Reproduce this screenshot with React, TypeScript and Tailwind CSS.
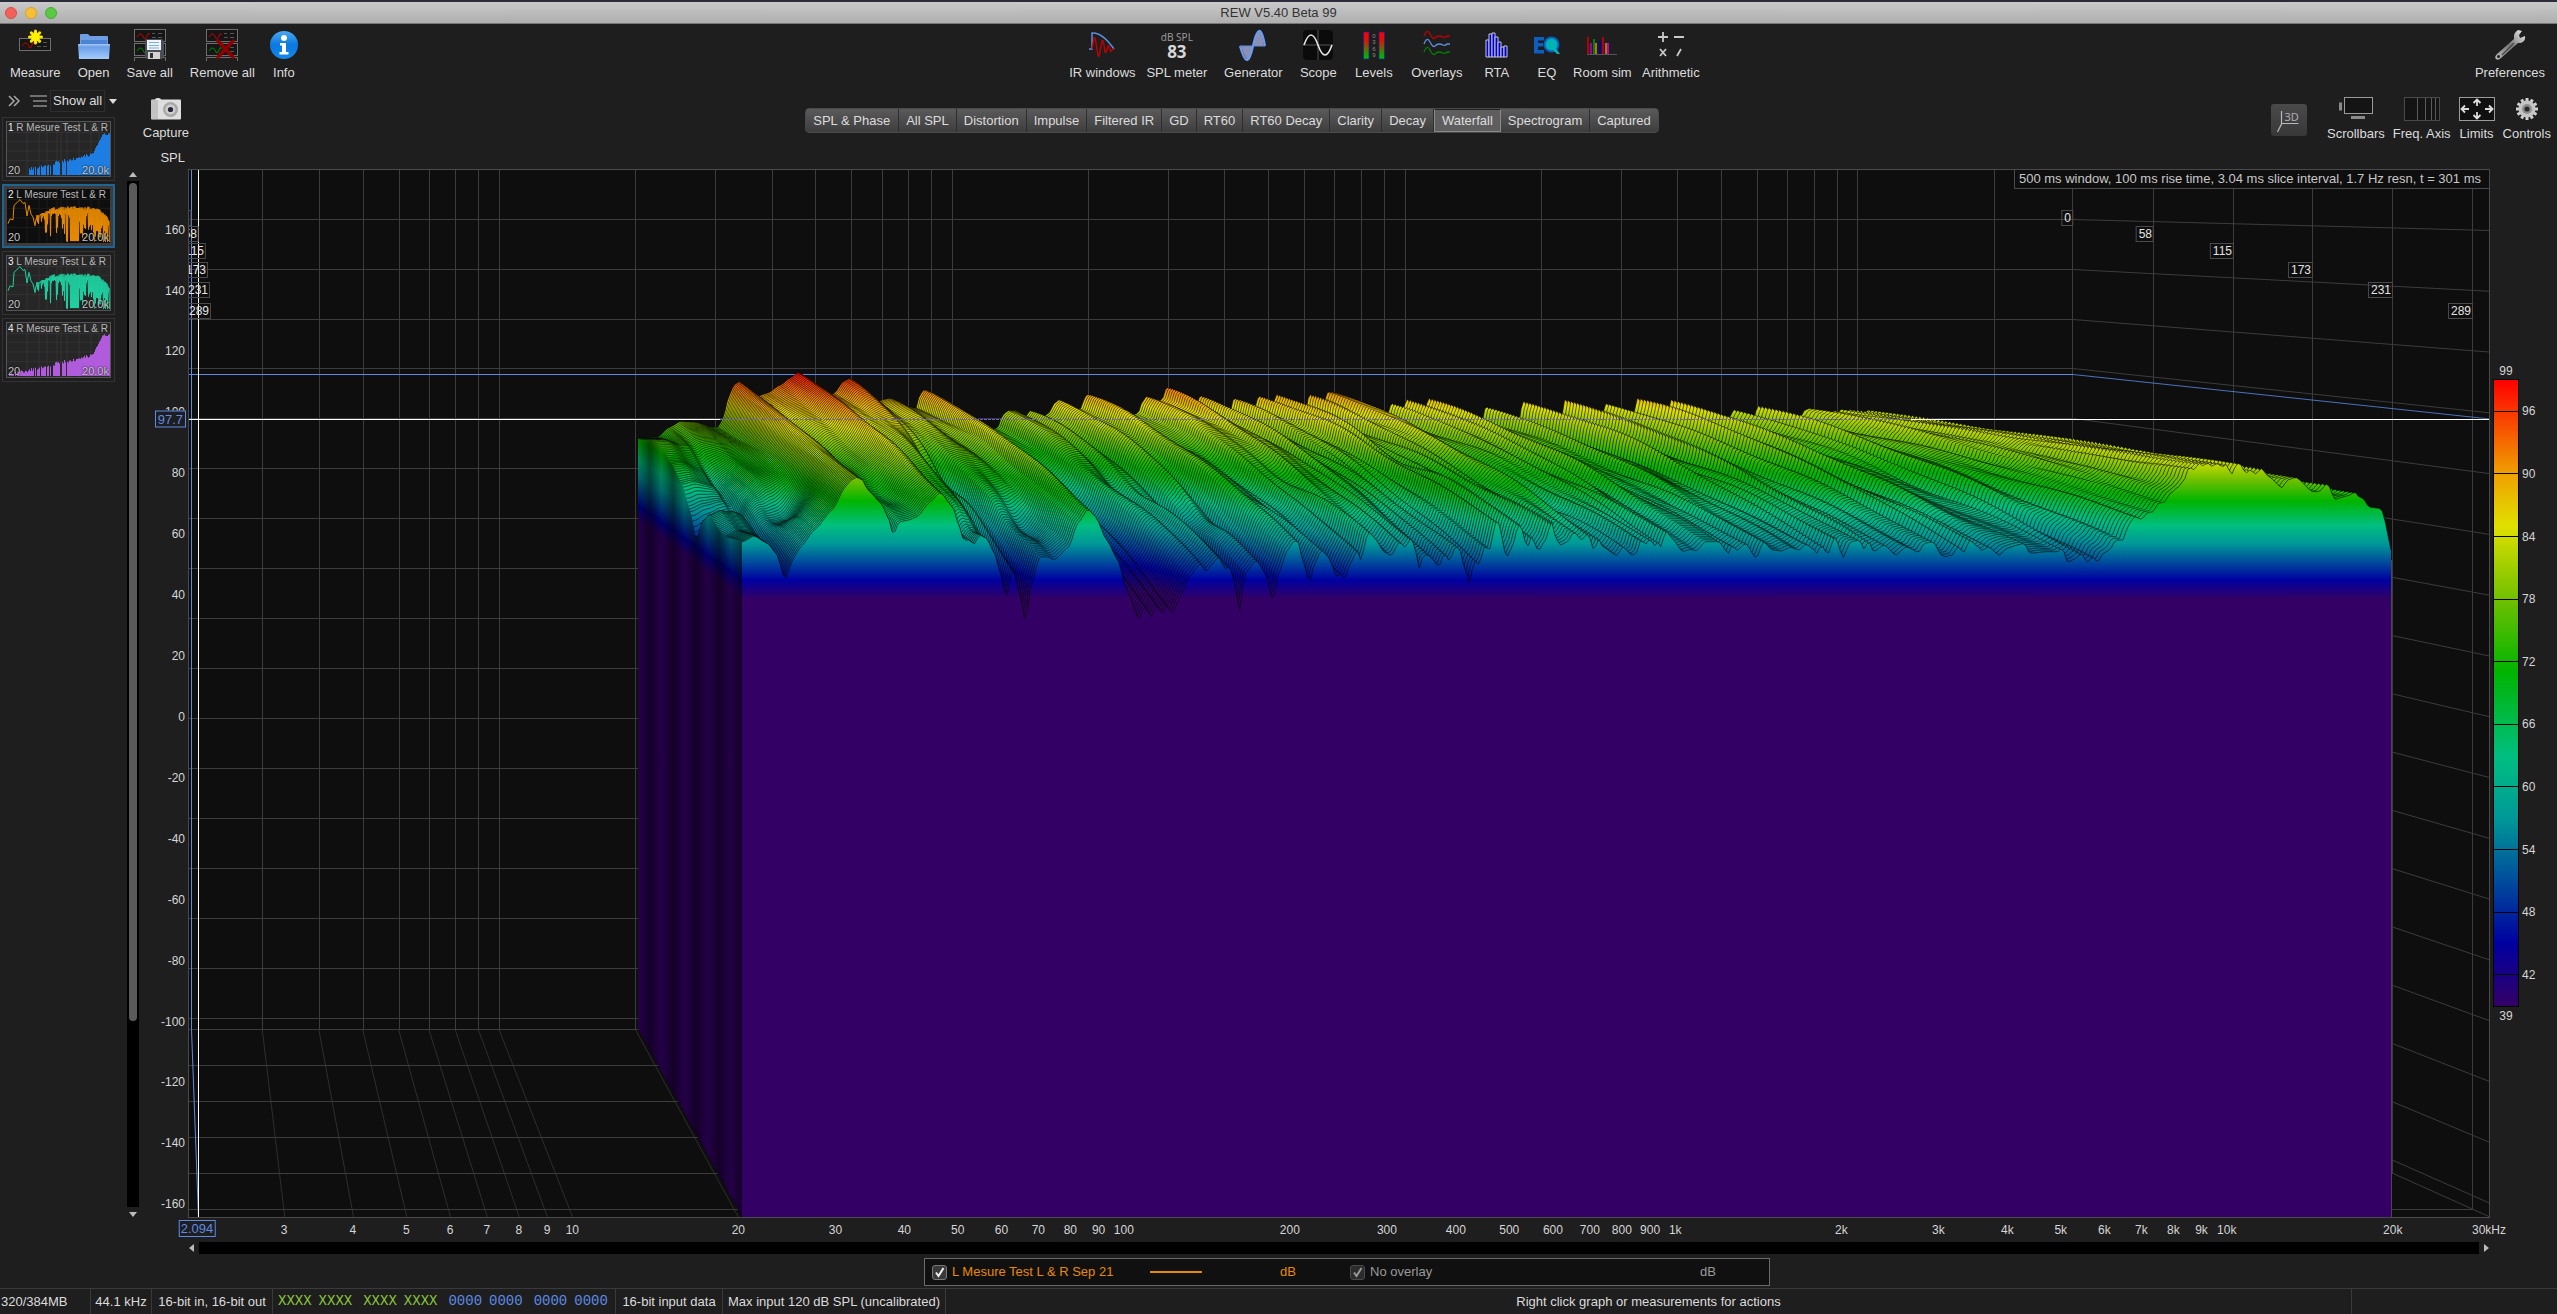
import React from "react";

type Pt = [number, number];

/* ------------------------------------------------------------------ */
/* Plot geometry: a back plane (t = 0 ms) and a front plane (301 ms).   */
/* ------------------------------------------------------------------ */
const LEFT = 189;
const TOP = 170;
const W = 2300;
const H = 1047;
const lerp = (a: number, b: number, s: number) => a + (b - a) * s;
const frontX = (f: number) => 573 + 551 * Math.log10(f / 10);
const backX = (f: number) => 499 + 452.8 * Math.log10(f / 10);
const planeY = (db: number, s: number) => lerp(618.3, 716.9, s) - lerp(2.498, 3.04, s) * db;
const pctX = (x: number) => `${((x - LEFT) / W) * 100}%`;
const pctY = (y: number) => `${((y - TOP) / H) * 100}%`;

const COLOURS: [number, string][] = [
  [99, "#ff0000"],
  [90, "#f0a000"],
  [85, "#e0e000"],
  [78, "#70c000"],
  [71, "#00b400"],
  [63, "#00bf80"],
  [57, "#009898"],
  [45, "#0000a0"],
  [39, "#330066"],
];

/* Response outlines, stored as flat x,y runs on a fine grid. */
const unpack = (flat: number[], x0: number, y0: number, sx: number): Pt[] => {
  const out: Pt[] = [];
  for (let i = 0; i < flat.length; i += 2) out.push([x0 + flat[i] / sx, y0 + flat[i + 1] / 3]);
  return out;
};

const FRONT: Pt[] = [
  ...unpack(
    [320,605,345,588,375,610,395,640,415,718,435,650,450,620,480,570,520,510,550,440,563,420,575,412,588,420,600,450,630,490,645,530,657,585,670,545,690,540,710,530,740,485,762,457,790,500,805,560,815,600,825,595,838,605,850,575,865,585,885,640,897,700,910,772,925,690,940,760,954,850,965,740,985,650,1000,650,1018,658,1050,620,1070,550,1093,507,1110,530,1135,600,1160,660,1180,750,1207,838,1220,800,1235,830,1245,795,1260,820,1270,795,1282,822,1300,770,1320,710,1345,670,1357,695,1370,675,1385,650,1400,685,1410,680,1420,720,1432,815,1445,700,1470,660,1490,700,1508,782,1520,700,1540,630,1555,602],
    600, 340, 2.24,
  ),
  ...unpack(
    [108,545,118,600,133,668,145,610,160,570,175,590,195,650,202,640,211,658,225,610,240,570,248,600,265,515,280,535,300,575,316,587,335,545,347,562,362,532,372,580,380,628,388,585,400,585,410,600,423,620,435,580,447,603,458,565,468,560,480,620,492,670,502,600,513,615,525,560,537,568,545,520,553,475,560,500,570,575,577,588,590,550,600,500,606,490,615,540,621,565,630,530,646,572,660,545,676,485,685,535,695,555,712,545,725,515,743,540,757,520,771,573,780,535,790,560,822,587,835,560,855,585,865,582,875,540,887,552,897,535,905,560,912,545,920,560,932,512,945,535,970,575,985,568,1000,572,1020,545,1050,545,1072,580,1080,555,1090,572,1110,550,1134,595,1150,545,1170,570,1190,573,1210,562,1230,570,1245,552,1260,565,1270,580,1280,555,1294,583,1310,530,1329,592,1345,545,1365,540,1377,570,1385,540,1397,575,1420,555,1447,585,1470,560,1498,577,1510,550,1530,545,1550,588],
    1250, 360, 2.24,
  ),
  ...unpack(
    [107,650,125,645,138,620,152,637,167,600,180,615,197,632,210,620,237,645,255,625,280,615,297,610,310,640,350,635,375,635,388,625,400,667,420,655,432,640,447,667,460,650,472,667,485,640,500,630,515,600,532,600,545,555,560,530,577,538,590,518,605,515,615,490,630,487,645,460,665,440,678,420,690,380,700,390,715,370,725,380,732,367,745,380,755,370,770,380,780,372,790,405,805,370,812,372,825,400,835,390,850,402,862,385,880,410,912,443,925,420,945,412,985,455,1000,455,1020,430,1038,478,1060,470,1075,465,1085,455,1095,470,1105,475,1120,502,1148,505,1160,550,1170,630],
    1900, 340, 2.3866,
  ),
].map(([x, y]): Pt => [(x - 742) / 1649, (716.9 - y) / 3.04]);

const BACK: Pt[] = [
  ...unpack(
    [84,295,130,290,155,262,180,245,215,247,250,262,265,262,275,235,290,165,300,135,312,125,330,145,350,170,375,160,405,135,425,115,445,97,470,125,500,165,525,160,545,125,560,115,590,150,620,185,650,175,690,200,708,205,716,165,728,147,750,190,790,240,850,275,890,265,902,225,915,212,930,212,950,235,965,210,985,240,1005,220,1018,190,1030,178,1050,215,1078,205,1086,170,1095,162,1120,200,1160,245,1205,220,1215,185,1225,168,1245,190,1260,178,1265,150,1272,142,1300,190,1335,200,1345,165,1370,200,1412,215,1420,173,1445,200,1468,205,1475,165,1495,195,1507,195,1515,162,1535,190,1548,195],
    600, 340, 2.24,
  ),
  ...unpack(
    [14,150,20,105,38,145,52,140,58,100,85,150,125,160,133,97,150,140,165,135,172,97,190,97,210,150,260,180,305,175,318,127,333,160,344,155,350,113,370,155,392,150,400,112,425,165,470,190,520,185,528,137,550,170,603,195,610,120,640,170,697,180,705,118,735,170,787,175,797,130,825,165,858,170,868,113,895,165,935,170,942,117,975,170,1030,190,1070,180,1085,148,1105,180,1128,180,1137,136,1165,175,1225,180,1252,142,1280,175,1320,165,1335,150,1352,165],
    1250, 360, 2.24,
  ),
].map(([x, y]): Pt => [(x - 638) / 1355, (618.3 - y) / 2.498]);

const sample = (pts: Pt[], u: number) => {
  if (u <= pts[0][0]) return pts[0][1];
  for (let i = 1; i < pts.length; i++) {
    if (u <= pts[i][0]) {
      const [xa, ya] = pts[i - 1];
      const [xb, yb] = pts[i];
      const k = (u - xa) / (xb - xa);
      const e = k * k * (3 - 2 * k);
      return lerp(ya, yb, (k + e) / 2);
    }
  }
  return pts[pts.length - 1][1];
};

/* Level along the 20 Hz edge over time. */
const EDGE: Pt[] = [[0, 72], [0.18, 75.5], [0.32, 70], [0.42, 64.8], [0.5, 56.9], [0.56, 48.5], [0.62, 56], [0.68, 59.4], [0.83, 55.7], [1, 57.6]];

/* Local nulls in the decay: u, s, depth, width in u, width in s. */
const NULLS = [
  [0.045, 0.72, 7, 0.012, 0.1],
  [0.03, 0.35, 4, 0.014, 0.14],
  [0.1, 0.48, 4, 0.01, 0.14],
  [0.102, 0.8, 3, 0.008, 0.1],
  [0.145, 0.92, 4, 0.008, 0.07],
  [0.17, 0.55, 6, 0.012, 0.12],
  [0.19, 0.8, 5, 0.01, 0.1],
  [0.235, 0.7, 6, 0.009, 0.12],
  [0.285, 0.55, 6, 0.01, 0.14],
  [0.31, 0.72, 5, 0.01, 0.1],
  [0.38, 0.6, 5, 0.008, 0.14],
  [0.47, 0.5, 4, 0.008, 0.14],
  [0.53, 0.65, 4, 0.008, 0.1],
];

const SLICES = 100;
const STEPS = 560;
const GRID = Array.from({ length: STEPS + 1 }, (_, i) => {
  const u = i / STEPS;
  const front = sample(FRONT, u);
  const back = u < 0.88 ? sample(BACK, u) : front;
  return { u, front, back };
});

const level = (g: { u: number; front: number; back: number }, s: number) => {
  const { u, front, back } = g;
  const bend = 1 + 0.38 * Math.min(1, Math.max(0, (u - 0.08) / 0.1));
  let db = lerp(back, front, Math.pow(s, bend));
  if (u < 0.12) db += (sample(EDGE, s) - lerp(72.1, 57.6, s)) * Math.exp(-((u / 0.022) ** 2));
  const mid = 4 * s * (1 - s);
  if (u < 0.86) {
    db += mid * 1.1 * (Math.sin(u * 210 + s * 6) * Math.sin(u * 83 - s * 8) + 0.6 * Math.sin(u * 420 - s * 9)) * Math.min(1, u * 8);
    for (const [nu, ns, depth, wu, ws] of NULLS) {
      const a = (u - nu) / wu;
      const b = (s - ns) / ws;
      if (Math.abs(a) < 3 && Math.abs(b) < 3) db -= depth * Math.exp(-a * a - b * b);
    }
  } else if (s < 1) {
    db += 0.5 * Math.sin(u * 900 + s * 14) * Math.min(1, (1 - s) * 6);
  }
  return db;
};

const Waterfall = React.memo(function Waterfall() {
  const slices = [];
  let wall = "";
  for (let k = 0; k < SLICES; k++) {
    const s = k / (SLICES - 1);
    const x0 = lerp(638, 742, s);
    const x1 = lerp(1993, 2391, s);
    const floor = lerp(1029.5, 1217.5, s);
    const top = GRID.map((g) => `${lerp(x0, x1, g.u).toFixed(1)} ${planeY(level(g, s), s).toFixed(1)}`).join("L");
    wall += `${k ? "L" : "M"}${x0.toFixed(1)} ${planeY(level(GRID[0], s), s).toFixed(1)}`;
    slices.push(
      <g key={k}>
        <linearGradient id={`lv${k}`} gradientUnits="userSpaceOnUse" x1="0" x2="0" y1={planeY(99, s)} y2={planeY(39, s)}>
          {COLOURS.map(([db, c]) => (
            <stop key={db} offset={(99 - db) / 60} stopColor={c} />
          ))}
        </linearGradient>
        <path d={`M${x0.toFixed(1)} ${floor.toFixed(1)}L${top}L${x1.toFixed(1)} ${floor.toFixed(1)}`} fill={`url(#lv${k})`} />
        <path d={`M${top}`} fill="none" stroke="#000" strokeOpacity={0.6} />
      </g>,
    );
  }
  return (
    <>
      {slices}
      <linearGradient id="ribs" gradientUnits="userSpaceOnUse" x1="650" x2="673" y1="0" y2="0" spreadMethod="repeat">
        <stop offset="0" stopOpacity="0.6" />
        <stop offset="0.5" stopOpacity="0.3" />
        <stop offset="1" stopOpacity="0.6" />
      </linearGradient>
      <path d={`${wall}V1217.5L638 1029.500Z`} fill="url(#ribs)" />
    </>
  );
});

const FREQS = [3, 4, 5, 6, 7, 8, 9, 10, 20, 30, 40, 50, 60, 70, 80, 90, 100, 200, 300, 400, 500, 600, 700, 800, 900, 1000, 2000, 3000, 4000, 5000, 6000, 7000, 8000, 9000, 10000, 20000];
const TIMES: [string, number, number, number][] = [
  ["0", 2073, 210, 191],
  ["58", 2154, 226, 199],
  ["115", 2234, 243, 206],
  ["173", 2313, 262, 208],
  ["231", 2393, 282, 210],
  ["289", 2473, 303, 211],
];
const DBS = Array.from({ length: 17 }, (_, i) => 160 - i * 20);

function Plot() {
  return (
    <div className="relative overflow-hidden border border-[#4a4a4a] bg-[#0e0e0e]">
      <svg className="absolute inset-0 h-full w-full" viewBox={`${LEFT} ${TOP} ${W} ${H}`} preserveAspectRatio="none">
        <g stroke="#3c3c3c" strokeWidth={1} fill="none">
          {FREQS.map((f) => {
            const x = Math.round(backX(f)) + 0.5;
            return <path key={f} d={`M${x} 169V1029.5`} />;
          })}
          {FREQS.map((f) => (
            <path key={f} d={`M${backX(f)} 1029.5L${frontX(f)} 1218`} stroke="#2e2e2e" />
          ))}
          {DBS.map((db) => (
            <path key={db} d={`M188 ${Math.round(planeY(db, 0)) + 0.5}H2073L2490 ${planeY(db, 1)}`} />
          ))}
          {TIMES.map(([t, x], i) => (
            <path key={t} d={`M188 ${1029.5 + i * 36}H${x - 0.5}V169`} />
          ))}
          <path d="M2073 1029.5L2490 1217" />
        </g>
        <g fill="none" stroke="#5d8ae6" strokeWidth={1}>
          <path d="M188 374.5H2073" />
          <path d="M2073 374.5L2490 419" strokeOpacity={0.8} />
          <path d="M191.5 169V1029.5L198.5 1218" />
        </g>
        <Waterfall />
        <path d="M188 419.5H720M1911 419.5H2490M198.5 169V1218" stroke="#fff" fill="none" />
        <path d="M720 419.5H1911" stroke="#6a5fe0" strokeDasharray="3 1" fill="none" />
        <path d="M2391.5 560V1218" stroke="#4a4a4a" fill="none" />
      </svg>
      {TIMES.map(([t, x, y, lx]) => (
        <React.Fragment key={t}>
          <span className="absolute -translate-x-full border border-[#4a4a4a] pl-0.5 pr-px text-xs leading-[14px] text-[#e4e4e4]" style={{ left: pctX(x), top: pctY(y) }}>
            {t}
          </span>
          <span className="absolute -translate-x-full border border-[#4a4a4a] pr-px text-xs leading-[14px] text-[#e4e4e4]" style={{ left: pctX(lx), top: pctY(y) }}>
            {t}
          </span>
        </React.Fragment>
      ))}
      <div className="absolute right-0 top-0 border-b border-l border-[#4a4a4a] bg-[#0e0e0e] pl-1 pr-2 text-[13px] leading-[18px] text-[#c8c8c8]">
        500 ms window, 100 ms rise time, 3.04 ms slice interval, 1.7 Hz resn, t = 301 ms
      </div>
    </div>
  );
}

function YAxis() {
  return (
    <div className="relative">
      {DBS.map((db) => (
        <span key={db} className="absolute right-[3px] -translate-y-1/2 text-xs leading-4 text-[#d6d6d6]" style={{ top: pctY(planeY(db, 1)) }}>
          {db}
        </span>
      ))}
      <span className="absolute right-[2px] z-10 -translate-y-1/2 border border-[#5d8ae6] bg-[#1e1e1e] px-0.5 text-[13px] leading-[15px] text-[#5d8ae6]" style={{ top: pctY(420) }}>
        97.7
      </span>
    </div>
  );
}

function XAxis() {
  const name = (f: number) => (f >= 1000 ? `${f / 1000}k` : `${f}`);
  return (
    <div className="relative h-6">
      {FREQS.map((f) => (
        <span key={f} className="absolute top-1 -translate-x-1/2 text-xs leading-4 text-[#d6d6d6]" style={{ left: pctX(frontX(f)) }}>
          {name(f)}
        </span>
      ))}
      <span className="absolute top-1 -translate-x-1/2 text-xs leading-4 text-[#d6d6d6]" style={{ left: pctX(2488) }}>
        30kHz
      </span>
      <span className="absolute top-0.5 -translate-x-1/2 border border-[#5d8ae6] bg-[#1e1e1e] px-px text-[13px] leading-[15px] text-[#5d8ae6]" style={{ left: pctX(198) }}>
        2.094
      </span>
    </div>
  );
}

function ColourScale() {
  return (
    <div className="flex flex-col pl-[3px] pt-[194px] text-xs text-[#d6d6d6]">
      <span className="w-[26px] text-center leading-4">99</span>
      <div className="relative h-[628px] w-[26px] border border-black bg-[linear-gradient(to_bottom,#ff0000_0%,#f0a000_15%,#e0e000_23.3%,#70c000_35%,#00b400_46.7%,#00bf80_60%,#009898_70%,#0000a0_90%,#330066_100%)]">
        {[96, 90, 84, 78, 72, 66, 60, 54, 48, 42].map((v) => (
          <div key={v} className="absolute left-0 flex w-[60px] -translate-y-1/2 items-center gap-1" style={{ top: `${((99 - v) / 60) * 100}%` }}>
            <span className="h-px w-6 bg-black" />
            <span className="leading-4">{v}</span>
          </div>
        ))}
      </div>
      <span className="w-[26px] text-center leading-[18px]">39</span>
    </div>
  );
}

/* ------------------------------ Icons ------------------------------ */
const Ic = ({ children, w = 32 }: { children: React.ReactNode; w?: number }) => (
  <svg width={w} height={32} viewBox={`0 0 ${w} 32`} fill="none" aria-hidden>
    {children}
  </svg>
);

const Card = ({ y, c }: { y: number; c: string }) => (
  <g>
    <rect x="0.5" y={y + 0.5} width="31" height="12" fill="#161616" stroke="#6e6e6e" />
    <path d={`M3 ${y + 8}q2-4 4-3t3 4 3-2 2-1`} stroke={c} />
    <path d={`M18 ${y + 4.5}h3m3 0h4M18 ${y + 8.5}h4m2 0h4`} stroke="#555" />
  </g>
);

const MeasureIcon = () => (
  <Ic>
    <Card y={9} c="#c00000" />
    <g stroke="#ffe600" strokeWidth="3" strokeLinecap="round">
      <path d="M16.500 2v12M10.500 8h12M12.300 3.800l8.400 8.400M20.700 3.800l-8.400 8.400" />
    </g>
    <circle cx="16.500" cy="8" r="4" fill="#fff200" />
  </Ic>
);
const OpenIcon = () => (
  <Ic>
    <defs>
      <linearGradient id="fold" x1="0" y1="0" x2="0" y2="1">
        <stop offset="0" stopColor="#a9c8f5" />
        <stop offset="0.200" stopColor="#6a9fe8" />
        <stop offset="1" stopColor="#a5cbfb" />
      </linearGradient>
    </defs>
    <path d="M2 16V6q0-1 1-1h7l2 2h17q1 0 1 1v8z" fill="#6f9fe2" />
    <path d="M3 11h26v5H3z" fill="#4c83d2" />
    <path d="M0 15h32l-1 15H1z" fill="url(#fold)" />
  </Ic>
);
const SaveIcon = () => (
  <Ic>
    <Card y={0} c="#c00000" />
    <Card y={14} c="#008a00" />
    <path d="M0.500 32v-3.500h31V32" stroke="#6e6e6e" />
    <path d="M11 12q0-2 2-2h15l2 2v16l-2 2H13q-2 0-2-2z" fill="#4a4f57" />
    <path d="M13 11h14v10H13z" fill="#eef4fa" />
    <path d="M15 13.500h10M15 16.500h10M15 19h10" stroke="#7fb0d8" />
    <path d="M14 23h12v7H14z" fill="#d4d4d4" />
    <path d="M16 24h3v5h-3z" fill="#333" />
  </Ic>
);
const RemoveIcon = () => (
  <Ic>
    <Card y={0} c="#c00000" />
    <Card y={14} c="#008a00" />
    <path d="M0.500 32v-3.500h31V32" stroke="#6e6e6e" />
    <path d="M12 12l15 16M27 12L12 28" stroke="#8f0000" strokeWidth="3.500" strokeLinecap="round" />
  </Ic>
);
const InfoIcon = () => (
  <Ic w={28}>
    <defs>
      <linearGradient id="inf" x1="0" y1="0" x2="0" y2="1">
        <stop offset="0" stopColor="#4ba9f5" />
        <stop offset="0.500" stopColor="#0a78e0" />
        <stop offset="1" stopColor="#1489ea" />
      </linearGradient>
    </defs>
    <circle cx="14" cy="16" r="14" fill="url(#inf)" />
    <circle cx="14" cy="9" r="3" fill="#fff" />
    <path d="M10 14h6v9h2.500v2.500h-9V23H12v-6.500h-2z" fill="#fff" />
  </Ic>
);
const IrIcon = () => (
  <Ic>
    <path d="M3 20h3V4q10-1 22 16" stroke="#5b8fe0" strokeWidth="1.500" />
    <path d="M6 20l2-10q1-4 2 4l2 12q1 4 2-4l2-10q1-2 2 4l1 7q1 2 2-3l1-3q1-1 2 4 1 3 2 0l2-1" stroke="#c00000" strokeWidth="1.400" />
  </Ic>
);
const SplIcon = () => (
  <div className="flex h-8 flex-col items-center justify-center">
    <span className="font-['Noto_Sans'] text-[10px] leading-3 text-[#9a9a9a]">dB SPL</span>
    <span className="font-['Noto_Sans'] text-[17px] font-bold leading-[17px] text-[#d8d8d8]">83</span>
  </div>
);
const GenIcon = () => (
  <Ic>
    <path d="M4 17h12q-2 14-5 14-3-1-7-14zM16 17q3-15 6-15 3 1 5 15z" fill="#8d8fb4" />
    <path d="M3 17q4 14 7 14t6-14 6-15 6 15" stroke="#6b9cf0" strokeWidth="2.200" />
    <path d="M3 17h25" stroke="#5b8fe0" />
  </Ic>
);
const ScopeIcon = () => (
  <Ic>
    <rect x="1" y="1" width="30" height="30" rx="4" fill="#0b0b0b" />
    <path d="M1 16h30M16 1v30" stroke="#555" />
    <path d="M2 16q7-20 14 0t14 0" stroke="#e6e6e6" strokeWidth="1.600" />
  </Ic>
);
const LevelsIcon = () => (
  <Ic>
    <defs>
      <linearGradient id="lev" x1="0" y1="0" x2="0" y2="1">
        <stop offset="0" stopColor="#ff0000" />
        <stop offset="0.300" stopColor="#e01000" />
        <stop offset="0.900" stopColor="#00b400" />
      </linearGradient>
    </defs>
    <rect x="5.500" y="3" width="5.500" height="27" fill="url(#lev)" stroke="#2020a0" strokeWidth="0.700" />
    <rect x="21" y="3" width="5.500" height="27" fill="url(#lev)" stroke="#2020a0" strokeWidth="0.700" />
    <g fill="#8a8a8a" fontSize="6" textAnchor="middle" fontFamily="Liberation Sans">
      <text x="16" y="9">0</text>
      <text x="16" y="15">3</text>
      <text x="16" y="22">6</text>
      <text x="16" y="28">9</text>
    </g>
  </Ic>
);
const OverlaysIcon = () => (
  <Ic>
    {[["#c00000", 7], ["#5b8fe0", 15], ["#008000", 23]].map(([c, y]) => (
      <path key={c} d={`M3 ${y}q3-8 6-2t5 4 4-2 4 1 4-1h3`} stroke={c as string} strokeWidth="1.300" />
    ))}
  </Ic>
);
const RtaIcon = () => (
  <Ic>
    {[[5, 11], [8, 5], [11, 4], [14, 8], [17, 13], [20, 18], [23, 17]].map(([x, y]) => (
      <path key={x} d={`M${x} 28V${y}h3V28z`} fill="#0000c8" stroke="#c8c8d8" strokeWidth="1" />
    ))}
  </Ic>
);
const EqIcon = () => (
  <Ic>
    <path d="M3 8h10v3.500H7V14h5v3.500H7V21h6v3.500H3z" fill="#0a5fc0" />
    <circle cx="20.500" cy="15.500" r="7" fill="#00b4b4" stroke="#0a5fc0" strokeWidth="2" />
    <path d="M20 19l6 6h3l-6-8z" fill="#00b4b4" />
  </Ic>
);
const RoomIcon = () => (
  <Ic>
    {[[2, 8, "#c00000"], [5, 14, "#a000c0"], [8, 10, "#008a00"], [10, 14, "#c08000"], [14, 12, "#0000c8"], [17, 8, "#c00000"], [20, 14, "#c08000"], [22, 14, "#c000c0"]].map(([x, y, c]) => (
      <path key={x} d={`M${x} 25V${y}`} stroke={c as string} strokeWidth="1.800" />
    ))}
    <path d="M1 25.500h30" stroke="#555" />
  </Ic>
);
const ArithIcon = () => (
  <Ic>
    <path d="M3 8h10M8 3v10M19 8h10M5 20l6 7M11 20l-6 7M26 20l-4 7" stroke="#c8c8c8" strokeWidth="1.800" />
  </Ic>
);
const WrenchIcon = () => (
  <Ic>
    <defs>
      <linearGradient id="wr" x1="1" y1="0" x2="0" y2="1">
        <stop offset="0" stopColor="#f4f4f4" />
        <stop offset="0.500" stopColor="#777" />
        <stop offset="1" stopColor="#bbb" />
      </linearGradient>
    </defs>
    <path d="M20 10q-1-6 4-9l4 1-3 4 1 3 5-2q1 5-4 7l-3 0L7 29q-3 3-5 1t1-5z" fill="url(#wr)" />
    <path d="M20 14L8 26" stroke="#444" strokeWidth="1.200" />
    <circle cx="4.500" cy="27.500" r="1.500" fill="#222" />
  </Ic>
);

const Tool = ({ label, icon, className = "" }: { label: string; icon: React.ReactNode; className?: string }) => (
  <button className={`flex shrink-0 flex-col items-center gap-0.5 whitespace-nowrap ${className}`}>
    {icon}
    <span className="leading-5">{label}</span>
  </button>
);

function Toolbar() {
  return (
    <header className="flex h-[61px] shrink-0 justify-between pt-[5px]">
      <div className="flex gap-[17px] pl-2.5">
        <Tool label="Measure" icon={<MeasureIcon />} />
        <Tool label="Open" icon={<OpenIcon />} />
        <Tool label="Save all" icon={<SaveIcon />} />
        <Tool label="Remove all" icon={<RemoveIcon />} />
        <Tool label="Info" icon={<InfoIcon />} className="w-6" />
      </div>
      <div className="flex">
        <Tool label="IR windows" icon={<IrIcon />} className="w-[76px]" />
        <Tool label="SPL meter" icon={<SplIcon />} className="w-[73px]" />
        <Tool label="Generator" icon={<GenIcon />} className="w-20" />
        <Tool label="Scope" icon={<ScopeIcon />} className="w-[50px]" />
        <Tool label="Levels" icon={<LevelsIcon />} className="w-[61px]" />
        <Tool label="Overlays" icon={<OverlaysIcon />} className="w-[65px]" />
        <Tool label="RTA" icon={<RtaIcon />} className="w-[55px]" />
        <Tool label="EQ" icon={<EqIcon />} className="w-[45px]" />
        <Tool label="Room sim" icon={<RoomIcon />} className="w-[66px]" />
        <Tool label="Arithmetic" icon={<ArithIcon />} className="w-[71px]" />
      </div>
      <div className="pr-3">
        <Tool label="Preferences" icon={<WrenchIcon />} />
      </div>
    </header>
  );
}

/* ----------------------------- Sidebar ----------------------------- */
const noise = (i: number) => {
  const v = Math.sin(i * 127.1 + 11.7) * 43758.5453;
  return v - Math.floor(v);
};
const risingPath = (start: number) => {
  let d = "M2 55";
  for (let x = start; x <= 102; x++) {
    const base = x < 86 ? lerp(52, 35, (x - 18) / 68) : x < 96 ? lerp(34, 15, (x - 86) / 10) : 14;
    if (x < 60 && noise(x + 50) > 0.75) continue;
    d += `M${x + 0.5} 55V${Math.min(54, base - 4 * noise(x)).toFixed(1)}`;
  }
  return d;
};
const fullPath = () => {
  let d = "M1 36L3 31 6 32 7 17 10 14 13 11 16 15 18 14 20 28 22 17 24 26 26 29 28 38";
  for (let x = 29; x <= 102; x++) {
    const top = (x < 50 ? lerp(27, 17, (x - 29) / 21) : x < 92 ? 18 : lerp(18, 31, (x - 92) / 10)) + 4 * noise(x);
    const low = x > 62 && x < 72 ? 54 : 25 + noise(x * 3) ** 2 * (x > 50 ? 32 : 24);
    d += `L${x} ${top.toFixed(1)} ${x + 0.5} ${Math.min(55, x > 82 ? low + 12 : low).toFixed(1)}`;
  }
  return d;
};
const RISING_A = risingPath(22);
const RISING_B = risingPath(1);
const FULL = fullPath();

const MEASUREMENTS = [
  { n: 1, name: "R Mesure Test L & R", colour: "#1e7fe8", path: RISING_A, on: false },
  { n: 2, name: "L Mesure Test L & R", colour: "#e88a00", path: FULL, on: true },
  { n: 3, name: "L Mesure Test L & R", colour: "#1fd0a0", path: FULL, on: false },
  { n: 4, name: "R Mesure Test L & R", colour: "#b45ce0", path: RISING_B, on: false },
];

function Sidebar() {
  return (
    <aside className="flex w-[140px] shrink-0">
      <div className="w-[127px]">
        <div className="flex h-[31px] items-center pl-2 pt-px">
          <button aria-label="Collapse" className="mr-2.5">
            <svg width="12" height="12" viewBox="0 0 12 12" fill="none" stroke="#a8a8a8" strokeWidth="1.500">
              <path d="M1 1l5 5-5 5M6 1l5 5-5 5" />
            </svg>
          </button>
          <button aria-label="List" className="mr-[3px]">
            <svg width="17" height="12" viewBox="0 0 17 12" stroke="#8a8a8a" strokeWidth="1.500">
              <path d="M0 1h17M3 6h14M3 11h14" />
            </svg>
          </button>
          <select aria-label="Filter" className="h-[22px] w-[55px] appearance-none border border-[#2e2e2e] bg-transparent pl-0.5 leading-5 outline-none">
            <option>Show all</option>
          </select>
          <svg className="ml-1" width="8" height="5" viewBox="0 0 8 5" fill="#ddd">
            <path d="M0 0h8L4 5z" />
          </svg>
        </div>
        <div className="flex flex-col gap-[3px] pl-0.5 pt-px">
          {MEASUREMENTS.map((m) => (
            <button key={m.n} className={`relative h-16 w-[113px] text-left ${m.on ? "border-2 border-[#1f6390] bg-[#3c3c3c] p-0.5" : "border border-[#333] p-[3px]"}`}>
              <div className={`relative h-full overflow-hidden border ${m.on ? "border-[#3c3c3c] bg-[#0e0e0e]" : "border-[#555] bg-[#262626]"}`}>
                <svg className="absolute inset-0 h-full w-full" viewBox="0 0 103 56" preserveAspectRatio="none" fill="none">
                  <path d="M0 11h103M0 20h103M0 30h103M0 40h103M20 0v56M32 0v56M40 0v56M50 0v56M54 0v56M60 0v56M72 0v56M84 0v56M92 0v56" stroke={m.on ? "#1c1c1c" : "#333"} />
                  <path d={m.path} stroke={m.colour} strokeWidth={1} />
                </svg>
                <div className="relative whitespace-nowrap pl-px text-[10px] leading-3 text-[#b8b8b8]">
                  <span className="text-[#f0f0f0]">{m.n}</span> {m.name}
                </div>
                <div className="absolute inset-x-0 bottom-0 flex justify-between px-px text-[11px] leading-3 text-[#c4c4c4] [text-shadow:0_0_2px_#000]">
                  <span>20</span>
                  <span>20.0k</span>
                </div>
              </div>
            </button>
          ))}
        </div>
      </div>
      <div className="flex w-3 flex-col items-center pb-[71px] pt-[87px]">
        <svg width="8" height="5" viewBox="0 0 8 5" fill="#bbb"><path d="M4 0l4 5H0z" /></svg>
        <div className="mb-[5px] mt-1 w-3 flex-1 bg-black p-0.5">
          <div className="h-[82%] rounded-full bg-[#5a5a5a]" />
        </div>
        <svg width="8" height="5" viewBox="0 0 8 5" fill="#bbb"><path d="M4 5l4-5H0z" /></svg>
      </div>
    </aside>
  );
}

/* --------------------------- Graph header -------------------------- */
const TABS = ["SPL & Phase", "All SPL", "Distortion", "Impulse", "Filtered IR", "GD", "RT60", "RT60 Decay", "Clarity", "Decay", "Waterfall", "Spectrogram", "Captured"];

function GraphHeader() {
  return (
    <div className="flex h-[84px] shrink-0 justify-between">
      <div className="flex w-[49px] flex-col items-end">
        <button className="mt-[13px] flex flex-col items-center">
          <svg width="30" height="22" viewBox="0 0 30 22">
            <path d="M4 2q0-2 3-2t3 2z" fill="#e8e8e8" />
            <rect x="0" y="1.500" width="30" height="20" rx="1" fill="#dedede" />
            <path d="M0 2h7v19H0z" fill="#c2c2c2" />
            <circle cx="19.500" cy="11.500" r="7.500" fill="#a8a8a8" />
            <circle cx="19.500" cy="11.500" r="5" fill="#cfcfcf" />
            <circle cx="19.500" cy="11.500" r="2.600" fill="#26263a" />
          </svg>
          <span className="mt-1 leading-[18px]">Capture</span>
        </button>
        <span className="mr-1 mt-2 leading-4">SPL</span>
      </div>
      <div className="ml-1 mt-[23px] flex h-[25px] rounded border border-[#4a4a4a] bg-linear-to-b from-[#5a5a5a] to-[#3e3e3e]" role="tablist">
        {TABS.map((t) => (
          <button
            key={t}
            role="tab"
            aria-selected={t === "Waterfall"}
            className={`border-r px-[7px] leading-5 first:pr-2 last:border-r-0 ${t === "Waterfall" ? "border border-[#8a8a8a] border-t-[#222] bg-[#5e5e5e]" : "border-[#2e2e2e]"}`}
          >
            {t}
          </button>
        ))}
      </div>
      <div className="flex items-start pr-1.5">
        <button aria-label="3D" className="mr-5 mt-[19px] h-8 w-9 rounded-[3px] bg-linear-to-b from-[#4a4a4a] to-[#383838]">
          <svg width="36" height="32" viewBox="0 0 36 32" fill="none">
            <path d="M10.500 7v13l-4 8M10.500 19.500h17" stroke="#b8b8b8" strokeWidth="1.200" />
            <text x="13.500" y="17" fill="#b0b0b0" fontSize="11" fontFamily="Noto Sans">3D</text>
          </svg>
        </button>
        <div className="mt-[11px] flex gap-2">
          <Small label="Scrollbars">
            <path d="M1 6.500h3v8H1zM13 20h14v3H13z" fill="#8a8a8a" />
            <rect x="6.500" y="1.500" width="28" height="16" fill="#141414" stroke="#9a9a9a" />
          </Small>
          <Small label="Freq. Axis">
            <rect x="0.500" y="1.500" width="35" height="23" fill="#141414" stroke="#4a4a4a" />
            <path d="M13.500 2v22M21.500 2v22M27.500 2v22M31.500 2v22" stroke="#5a5a5a" />
          </Small>
          <Small label="Limits">
            <rect x="0.500" y="1.500" width="35" height="23" fill="#101010" stroke="#9a9a9a" />
            <path d="M3 13h7M6 9.500L2.500 13 6 16.500M33 13h-7M30 9.500l3.500 3.500-3.500 3.500M18 4v6M14.500 7L18 3.500 21.500 7M18 22v-6M14.500 19l3.500 3.500 3.500-3.500" stroke="#dcdcdc" strokeWidth="1.800" />
          </Small>
          <Small label="Controls">
            {Array.from({ length: 12 }, (_, i) => (
              <rect key={i} x="16.500" y="2" width="3" height="5" fill="#d0d0d0" transform={`rotate(${i * 30} 18 13)`} />
            ))}
            <circle cx="18" cy="13" r="8.500" fill="#c4c4c4" />
            <circle cx="18" cy="13" r="5" fill="#8e8e8e" />
            <circle cx="18" cy="13" r="2.600" fill="#2a2a2a" />
          </Small>
        </div>
      </div>
    </div>
  );
}

const Small = ({ label, children }: { label: string; children: React.ReactNode }) => (
  <button className="flex flex-col items-center whitespace-nowrap">
    <svg width="36" height="26" viewBox="0 0 36 26" fill="none">{children}</svg>
    <span className="mt-[3px] leading-[18px]">{label}</span>
  </button>
);

const Check = ({ id, dim = false }: { id: string; dim?: boolean }) => (
  <span className="grid h-[15px] w-[15px] shrink-0">
    <input id={id} type="checkbox" defaultChecked className={`col-start-1 row-start-1 m-0 h-[15px] w-[15px] appearance-none rounded-[3px] border ${dim ? "border-[#4a4a4a] bg-[#2c2c2c]" : "border-[#777] bg-[#3a3a3a]"}`} />
    <svg className="pointer-events-none col-start-1 row-start-1" viewBox="0 0 15 15" fill="none" stroke={dim ? "#999" : "#f0f0f0"} strokeWidth="2">
      <path d="M4 7.500l2.500 3.500L11.500 3" />
    </svg>
  </span>
);

function Legend() {
  return (
    <div className="flex h-[34px] shrink-0 justify-center">
      <div className="mr-[3px] mt-1 flex h-7 w-[846px] items-center border border-[#6a6a6a] bg-[#101010] pl-[7px]">
        <Check id="trace" />
        <label htmlFor="trace" className="w-[203px] pl-[5px] text-[#e88a00]">L Mesure Test L &amp; R Sep 21</label>
        <span className="h-0.5 w-[52px] bg-[#e88a00]" />
        <span className="w-[148px] pl-[78px] text-[#e88a00]">dB</span>
        <Check id="overlay" dim />
        <label htmlFor="overlay" className="flex-1 pl-[5px] text-[#9a9a9a]">No overlay</label>
        <span className="pr-[53px] text-[#9a9a9a]">dB</span>
      </div>
    </div>
  );
}

function StatusBar() {
  const cell = "flex shrink-0 items-center border-r border-[#3a3a3a]";
  return (
    <footer className="flex h-[26px] shrink-0 whitespace-nowrap border-t border-[#3a3a3a]">
      <div className={`${cell} w-[91px] pl-px`}>320/384MB</div>
      <div className={`${cell} w-[61px] justify-center`}>44.1 kHz</div>
      <div className={`${cell} w-[121px] justify-center`}>16-bit in, 16-bit out</div>
      <div className={`${cell} w-[343px] gap-[11px] pl-[5px] font-['Liberation_Mono',monospace] text-[14px]`}>
        <span className="flex gap-[7px] text-[#8cc63a]"><span>XXXX</span><span>XXXX</span></span>
        <span className="flex gap-[7px] text-[#8cc63a]"><span>XXXX</span><span>XXXX</span></span>
        <span className="flex gap-[7px] text-[#5d8ae6]"><span>0000</span><span>0000</span></span>
        <span className="flex gap-[7px] text-[#5d8ae6]"><span>0000</span><span>0000</span></span>
      </div>
      <div className={`${cell} w-[107px] justify-center`}>16-bit input data</div>
      <div className={`${cell} w-[223px] pl-[5px]`}>Max input 120 dB SPL (uncalibrated)</div>
      <div className="flex flex-1 items-center justify-center border-r border-[#3a3a3a]">Right click graph or measurements for actions</div>
      <div className="w-[205px]" />
    </footer>
  );
}

export default function App() {
  return (
    <div className="flex h-screen flex-col overflow-hidden bg-[#1e1e1e] font-['Liberation_Sans',Arial,sans-serif] text-[13px] text-[#dcdcdc]">
      <div className="flex h-6 shrink-0 items-center border-b border-t-2 border-b-[#777] border-t-[#2b2b3a] bg-linear-to-b from-[#cacaca] to-[#aeaeae]">
        <div className="flex w-20 gap-2 pl-[5px]">
          <span className="h-3 w-3 rounded-full border border-[#d94b43] bg-[#f2625a]" />
          <span className="h-3 w-3 rounded-full border border-[#dba02f] bg-[#f6bf34]" />
          <span className="h-3 w-3 rounded-full border border-[#45ac34] bg-[#5bc944]" />
        </div>
        <h1 className="flex-1 text-center leading-5 text-[#333]">REW V5.40 Beta 99</h1>
        <div className="w-20" />
      </div>
      <Toolbar />
      <main className="flex min-h-0 flex-1">
        <Sidebar />
        <section className="flex min-w-0 flex-1 flex-col">
          <GraphHeader />
          <div className="grid min-h-0 flex-1 grid-cols-[48px_minmax(0,1fr)_67px] grid-rows-[minmax(0,1fr)_auto_auto]">
            <YAxis />
            <Plot />
            <ColourScale />
            <div />
            <XAxis />
            <div />
            <div />
            <div className="flex h-3 items-center gap-[5px]">
              <svg className="ml-px shrink-0" width="5" height="8" viewBox="0 0 5 8" fill="#bbb"><path d="M5 0v8L0 4z" /></svg>
              <div className="h-3 flex-1 bg-black" />
              <svg className="mr-px shrink-0" width="5" height="8" viewBox="0 0 5 8" fill="#bbb"><path d="M0 0v8l5-4z" /></svg>
            </div>
            <div />
          </div>
          <Legend />
        </section>
      </main>
      <StatusBar />
    </div>
  );
}
